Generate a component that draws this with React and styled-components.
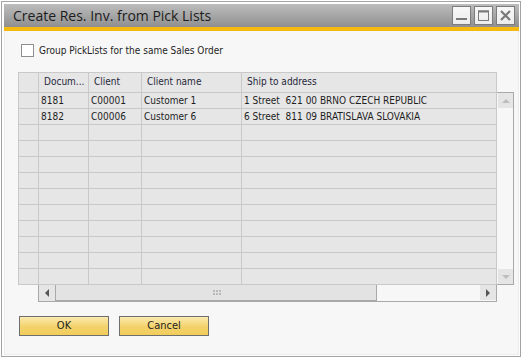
import React from 'react';
import styled, { createGlobalStyle } from 'styled-components';

const GlobalStyle = createGlobalStyle`
    html, body {
        margin: 0;
        padding: 0;
        background: #ffffff;
    }
    * {
        box-sizing: border-box;
    }
`;

// Window frame
const Frame = styled.div`
    margin: 1px 0 0 1px;
    width: 520px;
    height: 356px;
    border: 1px solid #a4a4a4;
    background: #fdfdfd;
    padding: 2px 1px 1px 2px;
    display: flex;
    flex-direction: column;
`;

const TitleBar = styled.div`
    height: 27px;
    flex: none;
    display: flex;
    align-items: flex-start;
    justify-content: space-between;
    background: linear-gradient(#bdbdbd, #8f8f8f) top / 100% 23px no-repeat;
    border-bottom: 4px solid #f5b910;
    padding: 0 4px 0 9px;
`;

const Title = styled.div`
    font-family: "Open Sans", sans-serif;
    font-size: 14px;
    line-height: 23px;
    color: #1c1c1c;
`;

const WinButtons = styled.div`
    display: flex;
    gap: 3px;
    padding-top: 2px;
`;

const WinButton = styled.div`
    width: 19px;
    height: 19px;
    border: 1px solid #7c7c7c;
    background: linear-gradient(#f8f8f8, #ececec);
    display: flex;
    align-items: center;
    justify-content: center;
`;

const Panel = styled.div`
    flex: 1;
    background: #f7f7f7;
    border: 1px solid #ececec;
    border-top: none;
    padding: 13px 0 0 13px;
    display: flex;
    flex-direction: column;
    font-family: "DejaVu Sans Condensed", "Liberation Sans", Arial, sans-serif;
    font-size: 10px;
    color: #1e1e1e;
`;

const CheckRow = styled.label`
    display: flex;
    align-items: center;
    gap: 5px;
    margin-left: 3px;
    height: 13px;
`;

const CheckBox = styled.span`
    width: 13px;
    height: 13px;
    border: 1px solid #8e8e8e;
    background: #ffffff;
`;

// Grid
const GridArea = styled.div`
    margin-top: 15px;
    display: grid;
    grid-template-columns: 479px 17px;
`;

const Table = styled.div`
    display: grid;
    grid-template-columns: 20px 50px 53px 100px 255px;
    grid-template-rows: 20px;
    grid-auto-rows: 16px;
    border-left: 1px solid #c9c9c9;
    border-top: 1px solid #c9c9c9;
    background: #e6e6e6;
`;

const Cell = styled.div`
    border-right: 1px solid #c9c9c9;
    border-bottom: 1px solid #c9c9c9;
    padding-left: ${p => (p.$header ? 5 : 2)}px;
    line-height: ${p => (p.$header ? 18 : 15)}px;
    white-space: pre;
    overflow: hidden;
    color: ${p => (p.$header ? '#26263a' : '#1e1e1e')};
`;

const VScroll = styled.div`
    margin-top: 20px;
    height: 193px;
    border: 1px solid #a9a9a9;
    border-left: none;
    background: #f7f7f7;
    padding-left: 1px;
    display: flex;
    flex-direction: column;
    justify-content: space-between;
`;

const ArrowButton = styled.div`
    width: ${p => p.$w}px;
    height: ${p => p.$h}px;
    background: #e5e5e5;
    display: flex;
    align-items: center;
    justify-content: center;
    flex: none;
`;

const HScroll = styled.div`
    grid-column: 1;
    margin-left: 20px;
    height: 17px;
    border: 1px solid #a9a9a9;
    border-top: none;
    background: #f7f7f7;
    display: flex;
`;

const Thumb = styled.div`
    width: 322px;
    height: 16px;
    border: 1px solid #a9a9a9;
    border-top: none;
    background: #e3e3e3;
    display: flex;
    align-items: center;
    justify-content: center;
    padding-left: 1px;
`;

const Track = styled.div`
    flex: 1;
`;

const ButtonRow = styled.div`
    margin-top: 14px;
    margin-left: 1px;
    display: flex;
    gap: 10px;
`;

const Button = styled.div`
    width: 90px;
    height: 20px;
    border: 1px solid #6e6e6e;
    background: linear-gradient(#fbeab0, #f3d26a 55%, #f2cd5c);
    font-size: 11px;
    line-height: 18px;
    text-align: center;
    color: #1e1e1e;
`;

const columns = ['', 'Docum...', 'Client', 'Client name', 'Ship to address'];
const rows = [
    ['', '8181', 'C00001', 'Customer 1', '1 Street  621 00 BRNO CZECH REPUBLIC'],
    ['', '8182', 'C00006', 'Customer 6', '6 Street  811 09 BRATISLAVA SLOVAKIA'],
];
const emptyRows = 10;

const Tri = ({ dir, color }) => {
    const pts = {
        up: '0,4 4,0 8,4',
        down: '0,0 8,0 4,4',
        left: '4,0 0,4 4,8',
        right: '0,0 4,4 0,8',
    }[dir];
    const vertical = dir === 'up' || dir === 'down';
    return (
        <svg width={vertical ? 8 : 4} height={vertical ? 4 : 8} viewBox={vertical ? '0 0 8 4' : '0 0 4 8'}>
            <polygon points={pts} fill={color} />
        </svg>
    );
};

const Grip = () => (
    <svg width="8" height="5" viewBox="0 0 8 5">
        {[0, 3, 6].map(x => [0, 3].map(y => (
            <rect key={`${x}-${y}`} x={x} y={y} width="2" height="2" fill="#b9b9b9" />
        )))}
    </svg>
);

const App = () => (
    <>
        <GlobalStyle />
        <Frame>
            <TitleBar>
                <Title>Create Res. Inv. from Pick Lists</Title>
                <WinButtons>
                    <WinButton>
                        <svg width="11" height="11" viewBox="0 0 11 11">
                            <rect x="0" y="8" width="11" height="2" fill="#7a7a7a" />
                        </svg>
                    </WinButton>
                    <WinButton>
                        <svg width="11" height="11" viewBox="0 0 11 11">
                            <rect x="0.5" y="1" width="10" height="9.5" fill="none" stroke="#7a7a7a" />
                            <rect x="0" y="0.5" width="11" height="2" fill="#7a7a7a" />
                        </svg>
                    </WinButton>
                    <WinButton>
                        <svg width="11" height="11" viewBox="0 0 11 11">
                            <path d="M1 1 L10 10 M10 1 L1 10" stroke="#7a7a7a" strokeWidth="2.2" />
                        </svg>
                    </WinButton>
                </WinButtons>
            </TitleBar>
            <Panel>
                <CheckRow>
                    <CheckBox />
                    Group PickLists for the same Sales Order
                </CheckRow>
                <GridArea>
                    <Table>
                        {columns.map((c, i) => <Cell key={`h${i}`} $header>{c}</Cell>)}
                        {rows.map((r, ri) => r.map((v, ci) => <Cell key={`r${ri}-${ci}`}>{v}</Cell>))}
                        {Array.from({ length: emptyRows }).map((_, ri) =>
                            columns.map((_, ci) => <Cell key={`e${ri}-${ci}`} />))}
                    </Table>
                    <VScroll>
                        <ArrowButton $w={15} $h={15}><Tri dir="up" color="#bdbdbd" /></ArrowButton>
                        <ArrowButton $w={15} $h={15}><Tri dir="down" color="#bdbdbd" /></ArrowButton>
                    </VScroll>
                    <HScroll>
                        <ArrowButton $w={16} $h={16}><Tri dir="left" color="#555555" /></ArrowButton>
                        <Thumb><Grip /></Thumb>
                        <Track />
                        <ArrowButton $w={16} $h={15}><Tri dir="right" color="#555555" /></ArrowButton>
                    </HScroll>
                </GridArea>
                <ButtonRow>
                    <Button>OK</Button>
                    <Button>Cancel</Button>
                </ButtonRow>
            </Panel>
        </Frame>
    </>
);

export default App;
